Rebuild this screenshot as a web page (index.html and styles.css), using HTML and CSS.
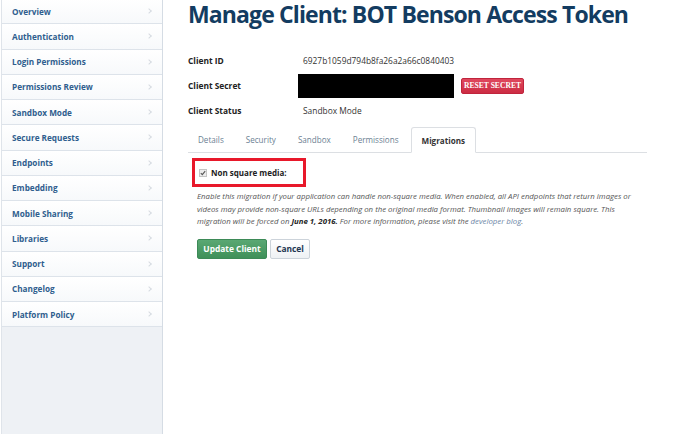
FILE: index.html
```html
<!DOCTYPE html>
<html>
<head>
<meta charset="utf-8">
<link rel="stylesheet" href="styles.css">
</head>
<body>
<div class="page">
  <nav class="sidebar">
    <a class="nav-item">Overview</a>
    <a class="nav-item">Authentication</a>
    <a class="nav-item">Login Permissions</a>
    <a class="nav-item">Permissions Review</a>
    <a class="nav-item">Sandbox Mode</a>
    <a class="nav-item">Secure Requests</a>
    <a class="nav-item">Endpoints</a>
    <a class="nav-item">Embedding</a>
    <a class="nav-item">Mobile Sharing</a>
    <a class="nav-item">Libraries</a>
    <a class="nav-item">Support</a>
    <a class="nav-item">Changelog</a>
    <a class="nav-item">Platform Policy</a>
  </nav>
  <main class="main">
    <h1 class="title">Manage Client: BOT Benson Access Token</h1>
    <div class="info">
      <div class="row"><div class="label">Client ID</div><div class="value">6927b1059d794b8fa26a2a66c0840403</div></div>
      <div class="row secret"><div class="label">Client Secret</div><div class="value"><span class="redact"></span><button class="btn-reset">RESET SECRET</button></div></div>
      <div class="row"><div class="label">Client Status</div><div class="value">Sandbox Mode</div></div>
    </div>
    <div class="tabs">
      <span class="tab">Details</span>
      <span class="tab">Security</span>
      <span class="tab">Sandbox</span>
      <span class="tab">Permissions</span>
      <span class="tab active">Migrations</span>
    </div>
    <div class="migration">
      <div class="highlight">
        <label class="check"><span class="box"><svg width="6" height="6" viewBox="0 0 6 6"><path d="M0.8 3.2 L2.3 4.6 L5.2 1.2" fill="none" stroke="#555" stroke-width="1.1"/></svg></span>Non square media:</label>
      </div>
      <p class="desc">Enable this migration if your application can handle non-square media. When enabled, all API endpoints that return images or videos may provide non-square URLs depending on the original media format. Thumbnail images will remain square. This migration will be forced on <b>June 1, 2016.</b> For more information, please visit the <a class="link">developer blog</a>.</p>
      <div class="actions">
        <button class="btn-update">Update Client</button>
        <button class="btn-cancel">Cancel</button>
      </div>
    </div>
  </main>
</div>
</body>
</html>
```

FILE: styles.css
```css
html, body {
  margin: 0;
  padding: 0;
  background: #fff;
  font-family: "Open Sans", "DejaVu Sans", sans-serif;
}
.page {
  display: flex;
  height: 434px;
  overflow: hidden;
}
.sidebar {
  width: 160px;
  margin-left: 1px;
  margin-top: -1px;
  flex: none;
  background: #eef1f5;
  border-left: 1px solid #dfe4ea;
  border-right: 1px solid #d5dce4;
  display: flex;
  flex-direction: column;
}
.nav-item {
  height: 24.25px;
  flex: none;
  border-bottom: 1px solid #dde3ea;
  background: linear-gradient(#ffffff, #f7f9fb);
  color: #2f5e8e;
  font-size: 8.2px;
  font-weight: 700;
  display: flex;
  align-items: center;
  padding-left: 10px;
  position: relative;
}
.nav-item::after {
  content: "";
  position: absolute;
  right: 11px;
  top: 10px;
  width: 3px;
  height: 3px;
  border-top: 1px solid #d6dbe1;
  border-right: 1px solid #d6dbe1;
  transform: rotate(45deg);
}
.main {
  flex: 1;
  min-width: 0;
  padding-left: 25px;
}
.title {
  margin: 0;
  font-size: 23px;
  line-height: 28px;
  font-weight: 700;
  color: #133c61;
  letter-spacing: -0.88px;
  white-space: nowrap;
}
.info {
  margin-top: 20px;
}
.row {
  display: flex;
  align-items: center;
  height: 25px;
}
.label {
  width: 115px;
  font-size: 8.4px;
  font-weight: 700;
  color: #222;
}
.value {
  color: #333;
  display: flex;
  align-items: center;
  font-size: 8.4px;
}
.secret .value {
  margin-left: -5px;
}
.redact {
  display: inline-block;
  width: 156px;
  height: 24px;
  background: #000;
}
.btn-reset {
  margin-left: 7px;
  height: 16px;
  width: 63px;
  padding: 0;
  border: 1px solid #c0243c;
  border-radius: 2px;
  background: linear-gradient(#e0485e, #cc2c43);
  color: #fff;
  font-family: "Liberation Serif", serif;
  font-size: 7.6px;
  font-weight: 700;
}
.tabs {
  margin-top: 4px;
  width: 459px;
  height: 26px;
  box-sizing: border-box;
  border-bottom: 1px solid #dcdfe3;
  display: flex;
  align-items: flex-end;
  font-size: 8.1px;
}
.tab {
  height: 25px;
  box-sizing: border-box;
  display: flex;
  align-items: center;
  padding: 0 10px;
  color: #6c7f93;
  margin-right: 2px;
}
.tab.active {
  border: 1px solid #dcdfe3;
  border-bottom: 1px solid #fff;
  margin-bottom: -1px;
  height: 26px;
  border-radius: 3px 3px 0 0;
  color: #333;
  font-weight: 700;
  padding: 0 10px;
  background: #fff;
}
.migration {
  padding-left: 4px;
}
.highlight {
  margin-top: 5px;
  width: 108px;
  height: 23px;
  border: 3px solid #e8182a;
  display: flex;
  align-items: center;
}
.check {
  display: flex;
  align-items: center;
  font-size: 8px;
  font-weight: 700;
  color: #222;
  padding-left: 4px;
}
.box {
  width: 6px;
  height: 6px;
  border: 1px solid #c4c4c4;
  background: #ececec;
  margin-right: 4px;
  display: flex;
}
.desc {
  margin: 3px 0 0 5px;
  width: 445px;
  font-size: 7.8px;
  line-height: 12.5px;
  font-style: italic;
  color: #555;
}
.desc b { color: #222; }
.link { color: #6c85a6; }
.actions {
  margin-top: 11px;
  margin-left: 5px;
  display: flex;
  gap: 3px;
}
.btn-update {
  height: 20px;
  width: 70px;
  padding: 0;
  border: 1px solid #3d8a57;
  border-radius: 2px;
  background: linear-gradient(#5aa873, #3f9059);
  color: #fff;
  font-family: "Open Sans", sans-serif;
  font-size: 8.4px;
  font-weight: 700;
}
.btn-cancel {
  height: 20px;
  width: 40px;
  padding: 0;
  border: 1px solid #ccd3da;
  border-radius: 2px;
  background: linear-gradient(#fff, #eef1f4);
  color: #1d3550;
  font-family: "Open Sans", sans-serif;
  font-size: 8.4px;
  font-weight: 700;
}
```
